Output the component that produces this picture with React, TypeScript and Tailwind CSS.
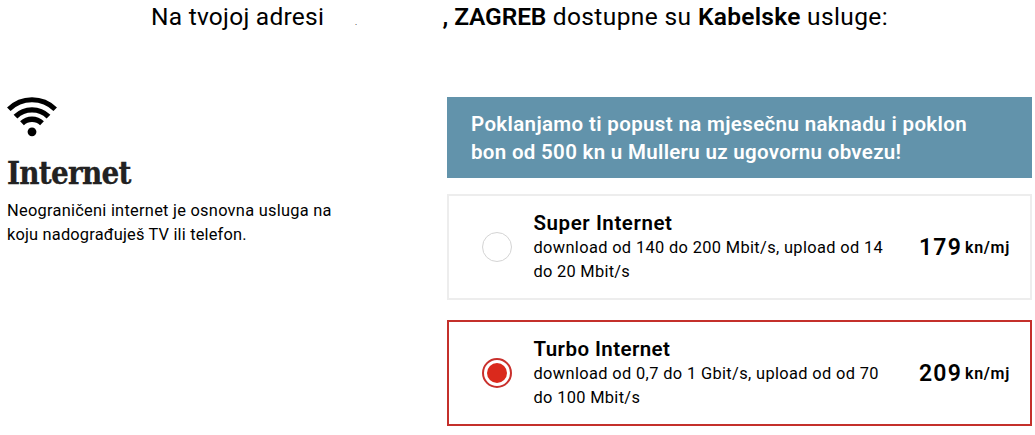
import { useState } from "react";

type Plan = {
  id: string;
  name: string;
  nameClass: string;
  lines: { text: string; className: string }[];
  price: string;
};

const plans: Plan[] = [
  {
    id: "super",
    name: "Super Internet",
    nameClass: "tracking-[0.57px]",
    lines: [
      { text: "download od 140 do 200 Mbit/s, upload od 14", className: "tracking-[0.35px]" },
      { text: "do 20 Mbit/s", className: "tracking-[0.28px]" },
    ],
    price: "179",
  },
  {
    id: "turbo",
    name: "Turbo Internet",
    nameClass: "tracking-[0.43px]",
    lines: [
      { text: "download od 0,7 do 1 Gbit/s, upload od od 70", className: "tracking-[0.36px]" },
      { text: "do 100 Mbit/s", className: "tracking-[0.33px]" },
    ],
    price: "209",
  },
];

function WifiIcon() {
  return (
    <svg width="50" height="40" viewBox="0 0 50 40" fill="none" stroke="black" strokeWidth="5">
      <path d="M1.8 12.2A33 33 0 0 1 48.2 12.2" />
      <path d="M8.5 19.6A23.5 23.5 0 0 1 41.5 19.6" strokeWidth="5.4" />
      <path d="M15 26.3A14.3 14.3 0 0 1 35 26.3" strokeWidth="5.4" />
      <circle cx="25" cy="34.8" r="4.4" fill="black" stroke="none" />
    </svg>
  );
}

function PlanCard({ plan, selected, onSelect }: { plan: Plan; selected: boolean; onSelect: () => void }) {
  return (
    <button
      type="button"
      role="radio"
      aria-checked={selected}
      onClick={onSelect}
      className={`flex h-[106px] w-full items-center border-2 pl-[33px] pr-5 text-left ${selected ? "border-[#c4302b]" : "border-[#ededed]"}`}
    >
      <span
        className={`flex size-[30px] shrink-0 items-center justify-center rounded-full ${selected ? "border-2 border-[#c9302c]" : "border border-[#d4d4d4]"}`}
      >
        {selected && <span className="size-5 rounded-full bg-[#da291c]" />}
      </span>
      <span className="ml-[21.5px] flex-1 whitespace-nowrap">
        <span className={`mb-px block text-[20.5px] leading-6 font-semibold ${plan.nameClass}`}>{plan.name}</span>
        {plan.lines.map((line) => (
          <span key={line.text} className={`block text-[16.4px] leading-6 ${line.className}`}>
            {line.text}
          </span>
        ))}
      </span>
      <span className="flex items-center gap-[3px] pt-[2px] whitespace-nowrap font-semibold">
        <span className="text-[23px] leading-6 tracking-[1.2px]">{plan.price}</span>
        <span className="text-base leading-6 tracking-[0.7px]">kn/mj</span>
      </span>
    </button>
  );
}

export default function App() {
  const [selected, setSelected] = useState("turbo");

  return (
    <main className="h-[435px] w-[1035px] overflow-hidden bg-white font-['Roboto',sans-serif] text-black">
      <h1 className="flex h-[97px] items-start pt-px pl-[151px] text-[24.5px] leading-8 whitespace-nowrap">
        <span className="w-[204px] tracking-[0.25px]">Na tvojoj adresi</span>
        <span className="w-[87.5px] pt-[8px] text-[8px] leading-7 text-black">.</span>
        <span className="tracking-[0.38px]">
          <b className="font-semibold tracking-[-0.1px]">, ZAGREB</b> dostupne su{" "}
          <b className="font-semibold tracking-[0.28px]">Kabelske</b> usluge:
        </span>
      </h1>

      <div className="flex">
        <section className="w-[447px] pl-[7px]">
          <WifiIcon />
          <h2 className="mt-4 font-['DejaVu_Serif_Condensed','DejaVu_Serif',serif] text-[31px] leading-10 font-bold tracking-[-0.75px] text-[#222] [-webkit-text-stroke:0.3px_#222]">
            Internet
          </h2>
          <p className="mt-1.5 text-[16.4px] leading-6 whitespace-nowrap">
            <span className="block tracking-[0.26px]">Neograničeni internet je osnovna usluga na</span>
            <span className="block tracking-[0.18px]">koju nadograđuješ TV ili telefon.</span>
          </p>
        </section>

        <section className="w-[585px]">
          <div className="h-[81px] bg-[#6293ab] pt-[13px] pl-6 text-[20.5px] leading-7 font-semibold whitespace-nowrap text-white">
            <p className="tracking-[0.36px]">Poklanjamo ti popust na mjesečnu naknadu i poklon</p>
            <p className="tracking-[0.31px]">bon od 500 kn u Mulleru uz ugovornu obvezu!</p>
          </div>
          <div role="radiogroup" aria-label="Internet" className="mt-4 flex flex-col gap-5">
            {plans.map((plan) => (
              <PlanCard key={plan.id} plan={plan} selected={plan.id === selected} onSelect={() => setSelected(plan.id)} />
            ))}
          </div>
        </section>
      </div>
    </main>
  );
}
